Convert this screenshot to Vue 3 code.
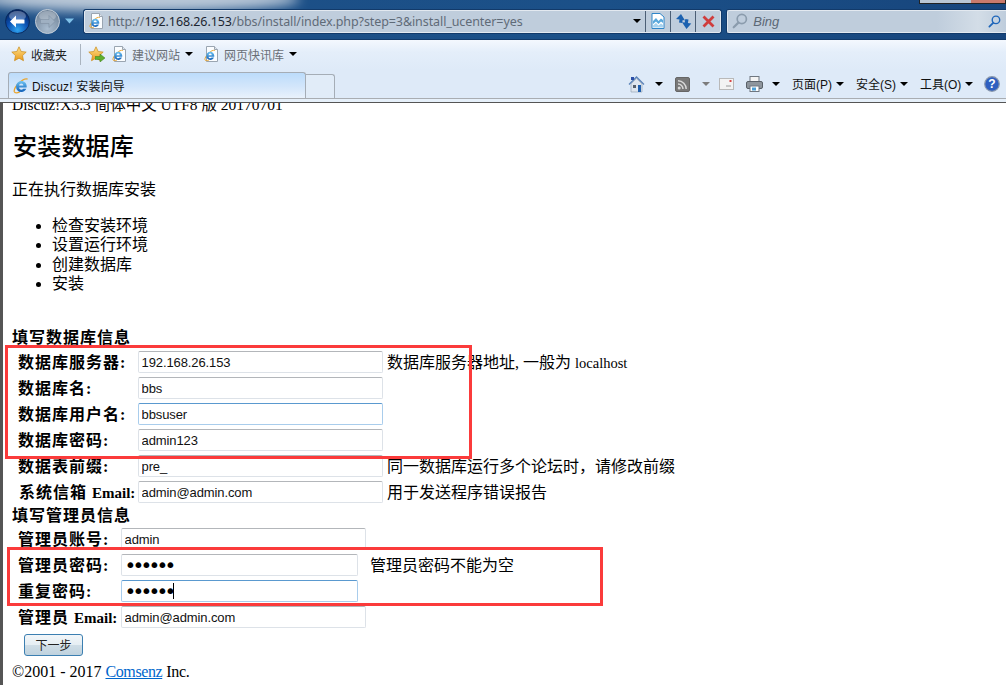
<template>
    <div class="window">
        <svg class="defs" width="0" height="0">
            <defs>
                <linearGradient id="ieBlue" x1="0" y1="0" x2="0" y2="1">
                    <stop offset="0" stop-color="#6ec3f2" />
                    <stop offset="1" stop-color="#0f5fb8" />
                </linearGradient>
                <radialGradient id="ballBlue" cx="0.5" cy="0.85" r="0.8">
                    <stop offset="0" stop-color="#2fa4f0" />
                    <stop offset="0.55" stop-color="#0b4fb0" />
                    <stop offset="1" stop-color="#06245f" />
                </radialGradient>
                <radialGradient id="ballGray" cx="0.5" cy="0.8" r="0.8">
                    <stop offset="0" stop-color="#a9bccf" />
                    <stop offset="1" stop-color="#6f8297" />
                </radialGradient>
                <linearGradient id="starFill" x1="0" y1="0" x2="0" y2="1">
                    <stop offset="0" stop-color="#fde08a" />
                    <stop offset="1" stop-color="#eb9a1c" />
                </linearGradient>
                <symbol id="ie" viewBox="0 0 16 16">
                    <path d="M14.6 1.2c-2-1-5.5.9-8.6 3.8C3 7.900.9 11.500 1.300 13.700c.4 1.700 3 1.500 5.400.2" fill="none" stroke="#e8a530" stroke-width="1.300" />
                    <path d="M8.300 3a5.400 5.400 0 0 0-5.300 5.600A5.300 5.300 0 0 0 8.400 14c2.300 0 4.100-1.200 4.900-3.200h-3.100c-.5.700-1.100 1-1.900 1-1.200 0-2.100-.9-2.200-2.200h7.500c.1-.4.100-.8.100-1.200C13.700 5.300 11.400 3 8.300 3zM6.100 7.500c.1-1.200 1-2.100 2.200-2.100s2 .9 2.100 2.100z" fill="url(#ieBlue)" />
                </symbol>
                <symbol id="star" viewBox="0 0 16 16">
                    <path d="M8 .8l2.200 4.700 5 .6-3.700 3.500 1 5.100L8 12.200l-4.500 2.500 1-5.100L.8 6.100l5-.6z" fill="url(#starFill)" stroke="#c98a1a" stroke-width=".7" />
                </symbol>
                <symbol id="pageIe" viewBox="0 0 16 16">
                    <path d="M2.500.5h8l3 3v12h-11z" fill="#fbfdff" stroke="#9aa5b1" />
                    <path d="M10.500.5v3h3" fill="#dfe6ee" stroke="#9aa5b1" />
                    <use href="#ie" x="0" y="3.500" width="12" height="12" />
                </symbol>
                <symbol id="lens" viewBox="0 0 16 16">
                    <circle cx="9.800" cy="6" r="4.600" fill="none" stroke="currentColor" stroke-width="1.700" />
                    <path d="M6.400 9.600L1.700 14.300" stroke="currentColor" stroke-width="2.200" stroke-linecap="round" />
                </symbol>
            </defs>
        </svg>

        <div class="navbar">
            <div class="titleglow"></div>
            <div class="capbtns"></div>
            <svg class="navball" width="25" height="25" viewBox="0 0 25 25">
                <circle cx="12.500" cy="12.500" r="12" fill="url(#ballBlue)" stroke="#0a2a5c" />
                <ellipse cx="12.500" cy="7" rx="8.500" ry="5" fill="#ffffff" opacity=".3" />
                <path d="M5 12.500l6-6v4h8.500v4H11v4z" fill="#fff" />
            </svg>
            <svg class="navball forward" width="25" height="25" viewBox="0 0 25 25">
                <circle cx="12.500" cy="12.500" r="12" fill="url(#ballGray)" stroke="#c4ced9" />
                <ellipse cx="12.500" cy="7" rx="8.500" ry="5" fill="#ffffff" opacity=".25" />
                <path d="M20 12.500l-6-6v4H5.500v4H14v4z" fill="#9fb0c2" stroke="#7f90a3" stroke-width=".6" />
            </svg>
            <svg class="navdrop" width="9" height="6" viewBox="0 0 9 6"><path d="M0 .5h9L4.500 5.500z" fill="#7fc2ea" /></svg>
            <div class="addr">
                <svg class="addrpage" width="16" height="16"><use href="#pageIe" /></svg>
                <span class="url">http://<b>192.168.26.153</b>/bbs/install/index.php?step=3&amp;install_ucenter=yes</span>
                <span class="caret addrcaret"></span>
                <span class="addrbtn">
                    <svg width="14" height="16" viewBox="0 0 14 16">
                        <path d="M1 .5h8L13 4v11.500H1z" fill="#fff" stroke="#2f86c9" />
                        <path d="M2 8l3-3 2.500 3L10 5.500 12 7v3l-2-1.500L7.500 11 5 8.500 2 11z" fill="#59a8dc" />
                        <path d="M2 12.500l3-2.500 2.500 2.500 2.500-2 2 1.500v2.500H2z" fill="#a6d2ef" />
                    </svg>
                </span>
                <span class="addrbtn">
                    <svg width="17" height="15" viewBox="0 0 17 15">
                        <path d="M6 0L1 5l3.500.6L4 8.500l3.200.5.500-3L10 6.400z" fill="#1c62b0" />
                        <path d="M11.500 15l4.800-5.500-3.400-.5.600-3.400-3.200-.5-.6 3.500-2.700-.4z" fill="#1c62b0" />
                    </svg>
                </span>
                <span class="addrbtn">
                    <svg width="13" height="13" viewBox="0 0 13 13">
                        <path d="M1.500 1.500l10 10M11.500 1.500l-10 10" stroke="#cf3d3d" stroke-width="2.800" />
                    </svg>
                </span>
            </div>
            <div class="search">
                <svg class="searchglass" width="16" height="16"><use href="#lens" /></svg>
                <span class="bing">Bing</span>
                <svg class="searchgo" width="13" height="13"><use href="#lens" /></svg>
            </div>
        </div>

        <div class="favbar">
            <svg class="favstar" width="16" height="16"><use href="#star" /></svg>
            <span class="favtext">收藏夹</span>
            <span class="favsep"></span>
            <span class="addfav">
                <svg width="16" height="16"><use href="#star" /></svg>
                <svg class="addarrow" width="10" height="8" viewBox="0 0 10 8"><path d="M0 2.500h5V0l5 4-5 4V5.500H0z" fill="#5fb02f" stroke="#3c7f1b" stroke-width=".5" /></svg>
            </span>
            <svg class="favpage" width="16" height="16"><use href="#pageIe" /></svg>
            <span class="favlink">建议网站</span>
            <span class="caret favcaret"></span>
            <svg class="favpage second" width="16" height="16"><use href="#pageIe" /></svg>
            <span class="favlink">网页快讯库</span>
            <span class="caret favcaret"></span>
        </div>

        <div class="tabbar">
            <div class="tabstrip">
                <div class="tab">
                    <svg width="16" height="16"><use href="#ie" /></svg>
                    <span>Discuz! 安装向导</span>
                </div>
                <div class="newtab"></div>
                <div class="tools">
                    <svg class="t-home" width="17" height="17" viewBox="0 0 17 17">
                        <path d="M1 8.500L8.500 1 16 8.500" fill="none" stroke="#5b83b8" stroke-width="1.300" />
                        <path d="M3 8L8.500 2.500 14 8v8H3z" fill="#dfe6ee" stroke="#8b9aab" stroke-width=".6" />
                        <path d="M3 1h3v3H3z" fill="#2b4fa8" />
                        <path d="M5 9h3v3H5z" fill="#56606c" />
                        <path d="M10 9h3v7h-3z" fill="#1f5fae" />
                    </svg>
                    <span class="caret t-caret"></span>
                    <svg class="t-rss" width="15" height="15" viewBox="0 0 15 15">
                        <rect x=".5" y=".5" width="14" height="14" rx="1.500" fill="#787878" stroke="#666" />
                        <circle cx="4.200" cy="11" r="1.500" fill="#d8d8d8" />
                        <path d="M3 7a5 5 0 0 1 5 5M3 3.800A8.200 8.200 0 0 1 11.200 12" fill="none" stroke="#d8d8d8" stroke-width="1.500" />
                    </svg>
                    <span class="caret t-caret muted"></span>
                    <svg class="t-mail" width="15" height="12" viewBox="0 0 15 12">
                        <rect x=".5" y=".5" width="14" height="11" fill="#f3f3f3" stroke="#b9b9b9" />
                        <path d="M7 8h5" stroke="#9a9a9a" />
                        <rect x="10.500" y="2" width="2" height="2" fill="#d84545" />
                    </svg>
                    <svg class="t-print" width="17" height="16" viewBox="0 0 17 16">
                        <rect x="4" y=".5" width="9" height="6" fill="#f4f4f4" stroke="#6f7780" />
                        <rect x=".5" y="5.500" width="16" height="7" rx="1.500" fill="#8e959c" stroke="#596068" />
                        <rect x="4" y="10" width="9" height="5.500" fill="#fff" stroke="#6f7780" />
                        <rect x="6" y="11.500" width="4" height="3" fill="#4d9fd6" />
                    </svg>
                    <span class="caret t-caret last"></span>
                    <span class="menu">页面(P)</span>
                    <span class="caret t-menu"></span>
                    <span class="menu">安全(S)</span>
                    <span class="caret t-menu"></span>
                    <span class="menu">工具(O)</span>
                    <span class="caret t-menu"></span>
                    <svg class="t-help" width="16" height="16" viewBox="0 0 16 16">
                        <circle cx="8" cy="8" r="7.300" fill="#2f5fc0" stroke="#8a98ad" stroke-width="1.200" />
                        <text x="8" y="12.300" text-anchor="middle" class="helpq">?</text>
                    </svg>
                </div>
            </div>
        </div>

        <div class="content">
            <div class="version">Discuz!X3.3 简体中文 UTF8 版 20170701</div>
            <h2>安装数据库</h2>
            <p class="running">正在执行数据库安装</p>
            <ul>
                <li v-for="s in steps" :key="s">{{ s }}</li>
            </ul>
            <div class="sect first">填写数据库信息</div>
            <div class="rows dbrows">
                <div class="row" v-for="r in dbRows" :key="r.label">
                    <label :class="{ shift: r.shift }">{{ r.label }}<span v-if="r.en" class="en">{{ r.en }}</span></label>
                    <input class="field" :class="{ focus: r.focus }" :value="r.value" readonly>
                    <span class="hint">{{ r.hint }}<span v-if="r.hintEn" class="hinten">{{ r.hintEn }}</span></span>
                </div>
            </div>
            <div class="sect second">填写管理员信息</div>
            <div class="rows adminrows">
                <div class="row" v-for="r in adminRows" :key="r.label">
                    <label>{{ r.label }}<span v-if="r.en" class="en">{{ r.en }}</span></label>
                    <input class="field" :class="{ short: r.short, focus: r.focus, pass: r.pass }" :type="r.pass ? 'password' : 'text'" :value="r.value" readonly>
                    <span class="hint">{{ r.hint }}</span>
                    <span v-if="r.focus" class="textcaret"></span>
                </div>
            </div>
            <button class="nextbtn">下一步</button>
            <div class="foot">©2001 - 2017 <a href="#">Comsenz</a> <span class="inc">Inc.</span></div>

            <div class="mark markdb"></div>
            <div class="mark markadmin"></div>
        </div>
    </div>
</template>

<script setup>
const steps = ['检查安装环境', '设置运行环境', '创建数据库', '安装']

const dbRows = [
    { label: '数据库服务器:', value: '192.168.26.153', hint: '数据库服务器地址, 一般为 ', hintEn: 'localhost' },
    { label: '数据库名:', value: 'bbs' },
    { label: '数据库用户名:', value: 'bbsuser', focus: true },
    { label: '数据库密码:', value: 'admin123' },
    { label: '数据表前缀:', value: 'pre_', hint: '同一数据库运行多个论坛时，请修改前缀' },
    { label: '系统信箱 ', en: 'Email:', value: 'admin@admin.com', hint: '用于发送程序错误报告', shift: true }
]

const adminRows = [
    { label: '管理员账号:', value: 'admin' },
    { label: '管理员密码:', value: '123456', pass: true, short: true, hint: '管理员密码不能为空' },
    { label: '重复密码:', value: '123456', pass: true, short: true, focus: true },
    { label: '管理员 ', en: 'Email:', value: 'admin@admin.com' }
]
</script>

<style>
html, body {
    margin: 0;
    background: #fff;
}
</style>

<style scoped>
.window {
    width: 1006px;
    height: 685px;
    overflow: hidden;
    display: flex;
    flex-direction: column;
    font-family: "Liberation Sans", "Noto Sans CJK SC", sans-serif;
}

.defs {
    position: absolute;
}

.navbar {
    position: relative;
    flex: none;
    height: 40px;
    box-sizing: border-box;
    display: flex;
    align-items: center;
    padding: 3px 0 0 5px;
    background: linear-gradient(90deg, #1d4f86 0, #1b5088 60%, #17457c 100%);
    border-bottom: 1px solid #123a6a;
}

.titleglow {
    position: absolute;
    left: -20px;
    top: -14px;
    width: 320px;
    height: 26px;
    border-radius: 50%;
    background: #d5dde6;
    filter: blur(6px);
    opacity: .85;
}

.capbtns {
    position: absolute;
    right: 0;
    top: -2px;
    width: 85px;
    height: 4px;
    border: 1px solid #222;
    background: linear-gradient(90deg, #b9c6d4 60%, #c97a6c 60%);
}

.navball {
    position: relative;
}

.navball.forward {
    margin-left: 5px;
}

.navdrop {
    position: relative;
    margin-left: 5px;
}

.addr {
    position: relative;
    width: 638px;
    height: 23px;
    margin-left: 10px;
    box-sizing: border-box;
    display: flex;
    align-items: center;
    border: 1px solid #e3e9f0;
    border-radius: 2px;
    background: #bfcddc;
    box-shadow: 0 0 0 1px #123a6a;
}

.addrpage {
    margin-left: 4px;
    flex: none;
}

.url {
    flex: 1;
    margin-left: 3px;
    font-family: "Noto Sans", sans-serif;
    font-size: 12.5px;
    letter-spacing: -.09px;
    color: #5f6b78;
    white-space: nowrap;
    overflow: hidden;
}

.url b {
    font-weight: 400;
    color: #1c2530;
}

.caret {
    flex: none;
    display: inline-block;
    width: 0;
    height: 0;
    border-left: 4px solid transparent;
    border-right: 4px solid transparent;
    border-top: 4px solid #000;
}

.addrcaret {
    margin-right: 4px;
}

.addrbtn {
    flex: none;
    width: 25px;
    height: 21px;
    box-sizing: border-box;
    border-left: 1px solid #4c5f75;
    display: flex;
    align-items: center;
    justify-content: center;
}

.search {
    width: 279px;
    height: 23px;
    margin-left: 6px;
    box-sizing: border-box;
    display: flex;
    align-items: center;
    padding-left: 4px;
    border: 1px solid #e3e9f0;
    border-right: 0;
    border-radius: 2px 0 0 2px;
    background: linear-gradient(90deg, #bfcddc 0, #bfcddc 75%, #d3dde7 90%, #bfcddc 100%);
    box-shadow: 0 0 0 1px #123a6a;
}

.searchglass {
    color: #8b9cad;
}

.bing {
    flex: 1;
    margin-left: 5px;
    font-size: 13px;
    font-style: italic;
    color: #5c6875;
}

.searchgo {
    margin-right: 5px;
    color: #1f66ba;
}

.favbar {
    flex: none;
    height: 30px;
    display: flex;
    align-items: center;
    padding-left: 11px;
    box-sizing: border-box;
    padding-bottom: 2px;
    font-size: 12px;
    background: linear-gradient(#f4f8fe, #e4eefa 40%, #deeaf8);
}

.favtext {
    margin-left: 4px;
    color: #1e1e1e;
}

.favsep {
    width: 1px;
    height: 21px;
    margin: 0 7px 0 13px;
    background: #aab4bf;
}

.addfav {
    position: relative;
    display: flex;
}

.addarrow {
    position: absolute;
    left: 7px;
    top: 8px;
}

.favpage {
    margin: 0 4px 0 8px;
}

.favpage.second {
    margin-left: 11px;
}

.favlink {
    color: #6a6f76;
}

.favcaret {
    margin-left: 5px;
}

.tabbar {
    flex: none;
    height: 32px;
    box-sizing: border-box;
    padding-bottom: 3px;
    background: #e6f0fa;
}

.tabstrip {
    height: 29px;
    box-sizing: border-box;
    display: flex;
    align-items: flex-end;
    padding-left: 8px;
    background: #deeaf8;
    border-bottom: 1px solid #a9adb2;
}

.tab {
    flex: none;
    width: 298px;
    height: 26px;
    box-sizing: border-box;
    display: flex;
    align-items: center;
    gap: 3px;
    padding-left: 4px;
    border: 1px solid #a5adb6;
    border-bottom: 0;
    border-radius: 3px 3px 0 0;
    font-size: 12px;
    letter-spacing: .2px;
    color: #111;
    background: linear-gradient(#bcdcfb, #d3e6fb 55%, #e9f2fc);
}

.newtab {
    flex: none;
    width: 29px;
    height: 24px;
    box-sizing: border-box;
    border: 1px solid #a5adb6;
    border-left: 0;
    border-bottom: 0;
    border-radius: 0 3px 0 0;
    background: #e1ecf8;
}

.tools {
    flex: 1;
    align-self: stretch;
    display: flex;
    align-items: center;
    padding-left: 293px;
    box-sizing: border-box;
    font-size: 12px;
    color: #111;
    white-space: nowrap;
}

.tools svg {
    flex: none;
}

.menu {
    margin-top: -2px;
}

.t-caret {
    margin: 0 12px 0 10px;
}

.t-caret.muted {
    border-top-color: #7c7c7c;
    margin-left: 12px;
    margin-right: 9px;
}

.t-caret.last {
    margin-left: 9px;
}

.t-mail {
    margin-right: 12px;
}

.t-menu {
    margin: 0 12px 0 4px;
}

.t-help {
    margin-left: -1px;
}

.helpq {
    font: bold 12px "Liberation Sans", sans-serif;
    fill: #fff;
}

.content {
    position: relative;
    flex: 1;
    box-sizing: border-box;
    overflow: hidden;
    border-left: 3px solid #555;
    border-top: 1px solid #555;
    padding-left: 9px;
    background: #fff;
    font-family: "Liberation Serif", "Noto Sans CJK SC", serif;
    font-size: 16px;
    color: #000;
}

.version {
    margin-top: -7px;
    font-size: 15.5px;
    line-height: 18px;
    white-space: nowrap;
}

h2 {
    margin: 17px 0 0 1px;
    font-size: 24px;
    line-height: 32px;
    font-weight: 500;
    letter-spacing: .2px;
}

.running {
    margin: 17px 0 0;
    line-height: 20px;
}

ul {
    margin: 15.700px 0 0;
    padding-left: 40px;
}

li {
    line-height: 19.500px;
}

.sect {
    font-weight: 700;
    line-height: 20px;
    letter-spacing: 1px;
}

.sect.first {
    margin-top: 34.300px;
}

.sect.second {
    margin-top: 3px;
}

.rows {
    position: relative;
    display: flex;
    flex-direction: column;
    gap: 4px;
    padding-left: 6px;
    padding-top: 2px;
}

.rows.dbrows {
    padding-top: 3px;
}

.row {
    position: relative;
    height: 22px;
    display: flex;
    align-items: center;
}

.row label {
    flex: none;
    margin-top: -2px;
    box-sizing: border-box;
    font-weight: 700;
    white-space: nowrap;
    letter-spacing: 1px;
}

.en {
    font-size: 15px;
    font-weight: 700;
    letter-spacing: 0;
}

.dbrows label {
    width: 120px;
}

.adminrows label {
    width: 103px;
}

.row label.shift {
    padding-left: 1px;
}

.field {
    flex: none;
    width: 245px;
    height: 22px;
    box-sizing: border-box;
    padding: 1px 2.500px 0;
    border: 1px solid #dde2e8;
    border-top-color: #b3b6ba;
    border-radius: 2px;
    outline: none;
    background: #fff;
    font-family: "Liberation Sans", sans-serif;
    font-size: 13px;
    letter-spacing: -.1px;
    color: #111;
}

.field.short {
    width: 237px;
}

.field.focus {
    border-color: #a9cdec;
    border-top-color: #5a99cf;
}

.field.pass {
    padding-top: 0;
    font-family: "DejaVu Sans", sans-serif;
    font-size: 20px;
    letter-spacing: -3.800px;
    color: #000;
}

.hint {
    margin-top: -2px;
    margin-left: 4px;
    white-space: nowrap;
}

.hinten {
    font-size: 14.500px;
}

.adminrows .hint {
    margin-left: 12px;
}

.textcaret {
    position: absolute;
    left: 155px;
    top: 3px;
    width: 1px;
    height: 16px;
    background: #000;
}

.nextbtn {
    display: block;
    width: 59px;
    height: 22px;
    margin: 6px 0 0 12px;
    padding: 0;
    border: 1px solid #3c7fb1;
    border-radius: 3px;
    background: linear-gradient(#f2f6f9, #e6eef3 48%, #cfdde6 52%, #bfd2de);
    font-family: "Noto Sans CJK SC", sans-serif;
    font-size: 12px;
    color: #222;
}

.foot {
    margin-top: 6px;
    line-height: 20px;
}

.foot a {
    color: #0066cc;
    letter-spacing: -.4px;
}

.inc {
    letter-spacing: -.3px;
}

.mark {
    position: absolute;
    box-sizing: border-box;
    border: 3px solid #fb3b3b;
    pointer-events: none;
}

.markdb {
    left: 2px;
    top: 242px;
    width: 467px;
    height: 114px;
}

.markadmin {
    left: 4px;
    top: 444px;
    width: 596px;
    height: 59px;
}
</style>
